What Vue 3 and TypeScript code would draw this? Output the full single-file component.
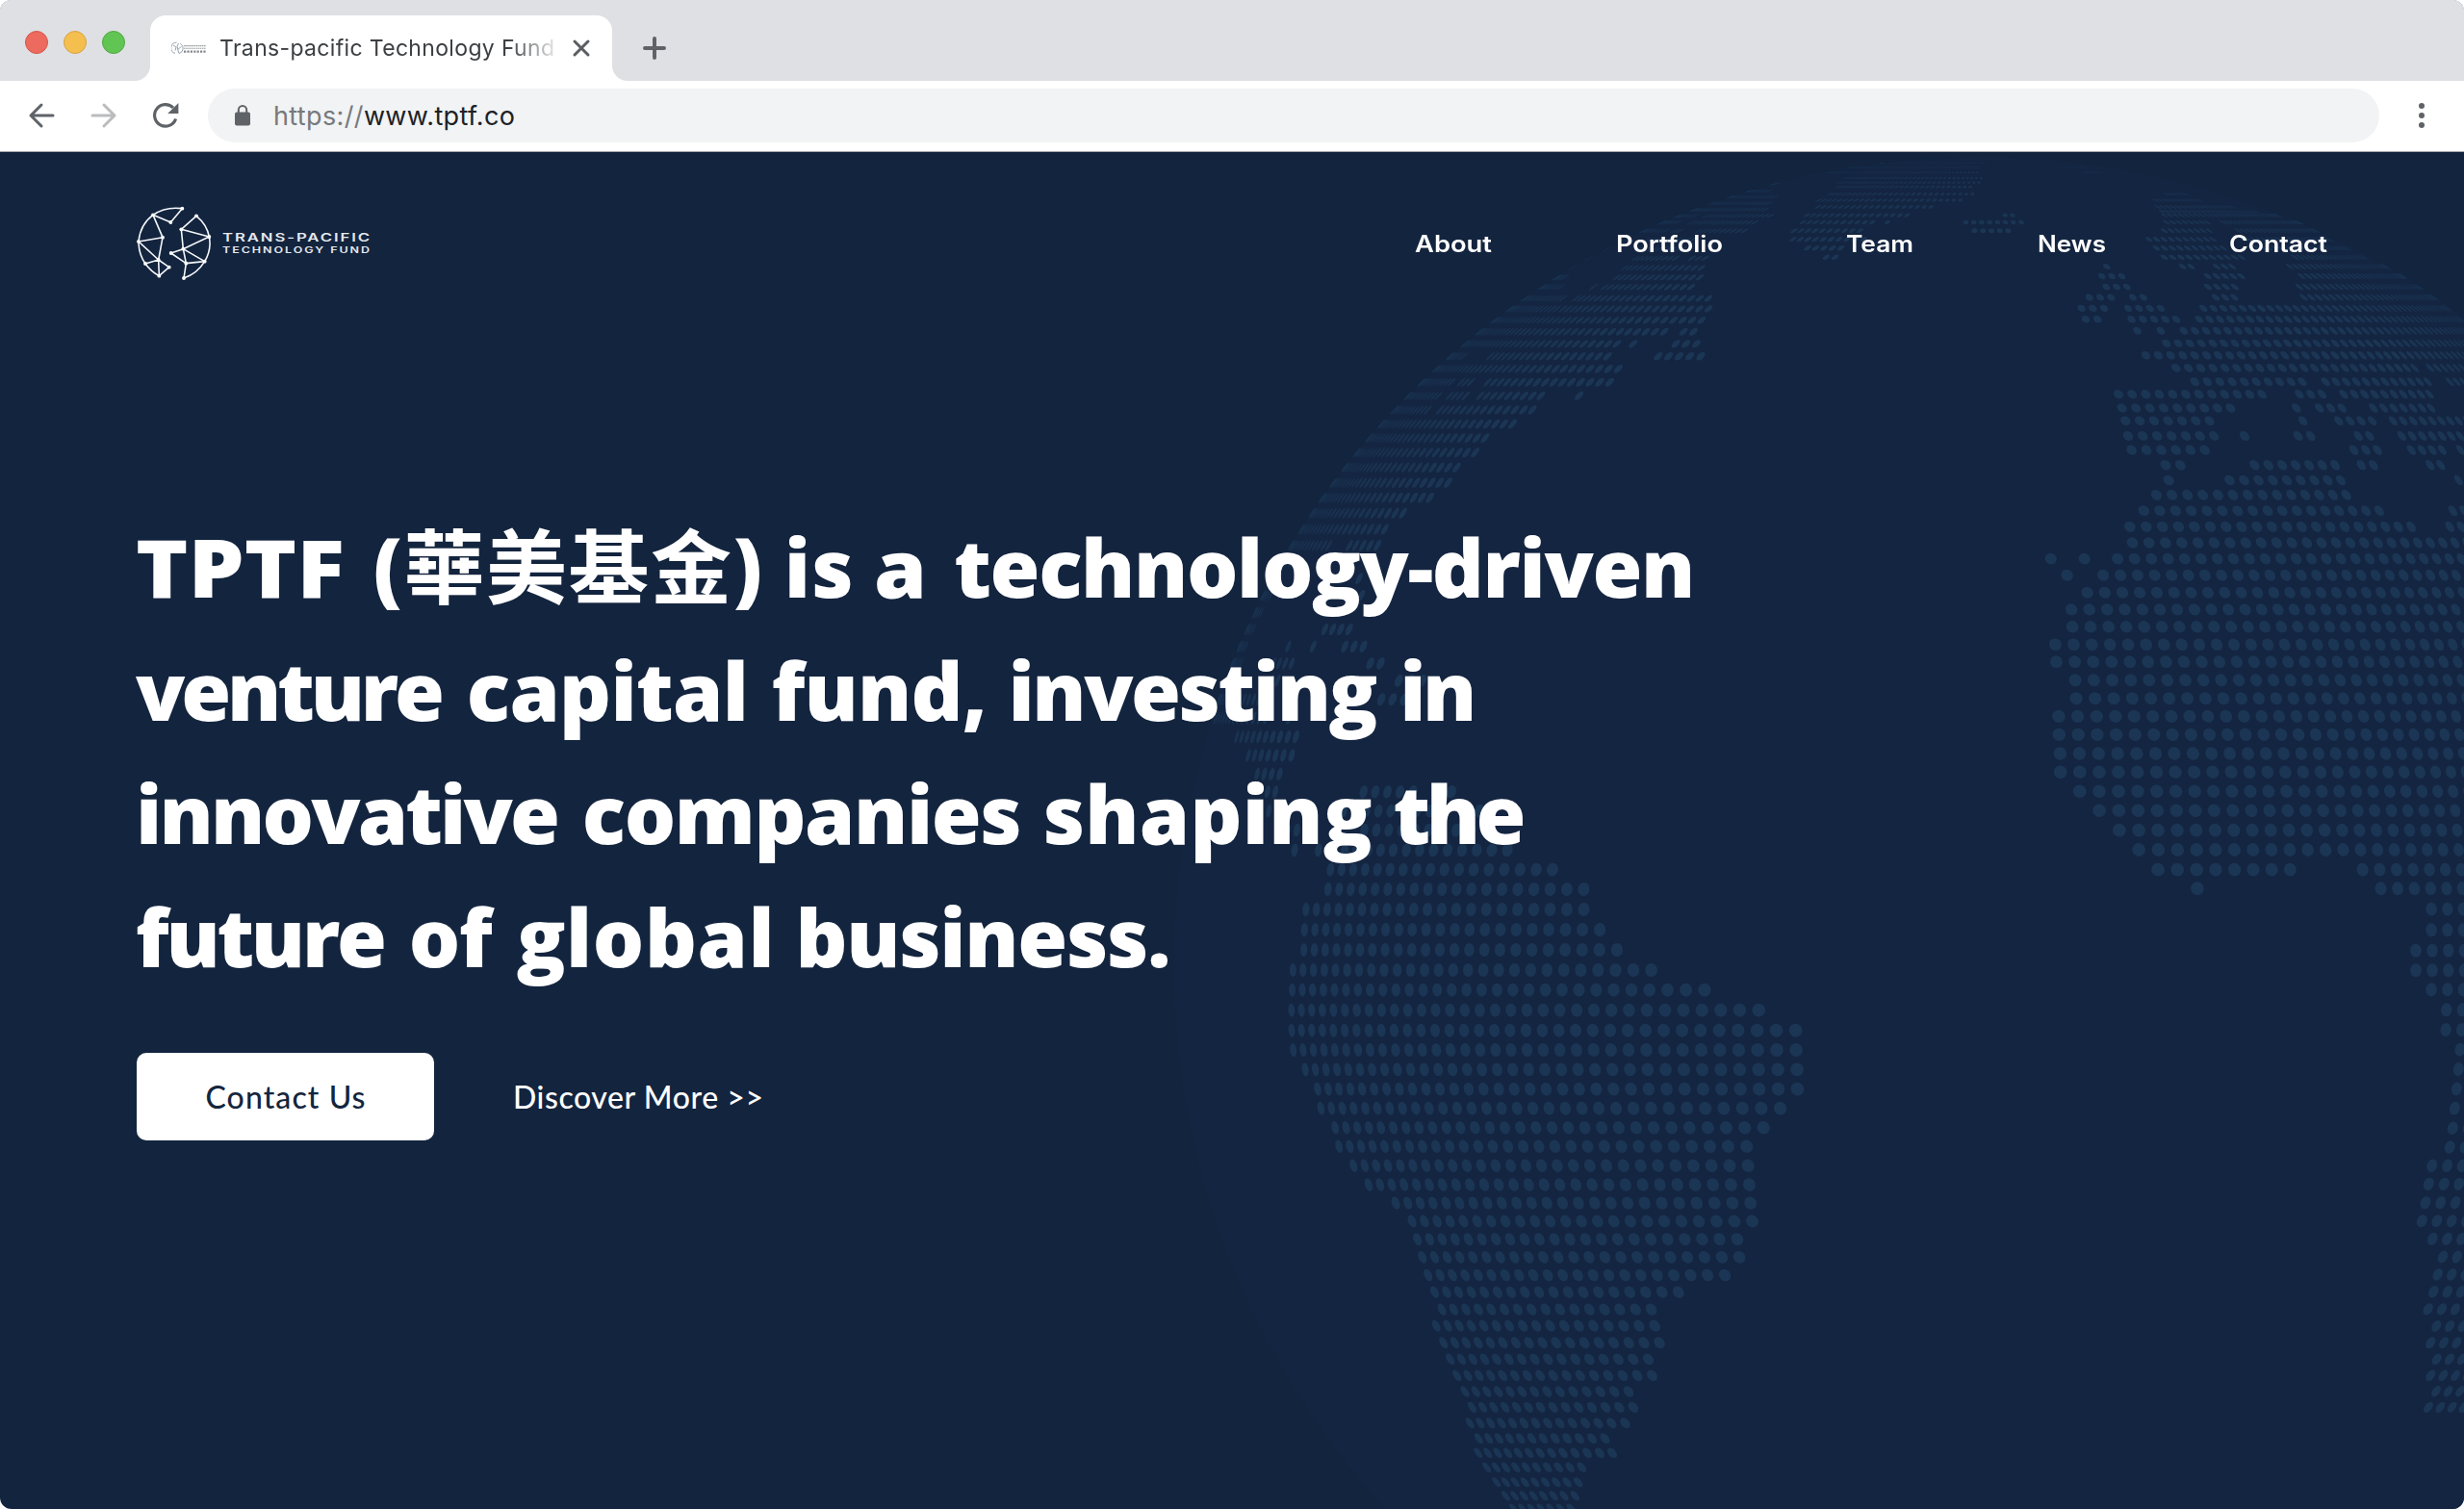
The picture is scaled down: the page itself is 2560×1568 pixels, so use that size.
<script setup lang="ts">
import type { Directive } from 'vue'

/*
 * Makes an element's text take the given width: by letter spacing, or with
 * the .stretch modifier by widening the letters themselves.
 */
const vFit: Directive<HTMLElement, number> = {
  mounted(el, binding) {
    const natural = el.getBoundingClientRect().width
    const count = Array.from(el.textContent ?? '').length
    if (binding.modifiers.stretch || el.classList.contains('caps') || count < 2) {
      el.style.transformOrigin = '0 50%'
      el.style.transform = `scaleX(${(binding.value / natural).toFixed(4)})`
      el.style.marginRight = `${(binding.value - natural).toFixed(3)}px`
      return
    }
    const step = (binding.value - natural) / (count - 1)
    el.style.letterSpacing = `${step.toFixed(3)}px`
    el.style.marginRight = `${(-step).toFixed(3)}px`
  },
}

const navItems = [
  { label: 'About', width: 80 },
  { label: 'Portfolio', width: 111 },
  { label: 'Team', width: 70 },
  { label: 'News', width: 71 },
  { label: 'Contact', width: 102 },
]

interface Word {
  text: string
  width: number
  /* extra space before the word */
  lead?: number
  /* Chinese characters, set in parentheses */
  han?: boolean
  caps?: boolean
}

const headline: Word[][] = [
  [
    { text: 'TPTF', width: 217, caps: true },
    { text: '華美基金', width: 404, lead: 8, han: true },
    { text: 'is', width: 72, lead: 1 },
    { text: 'a', width: 55 },
    { text: 'technology-driven', width: 770, lead: 6 },
  ],
  [
    { text: 'venture', width: 321 },
    { text: 'capital', width: 293, lead: 1 },
    { text: 'fund,', width: 224, lead: 2 },
    { text: 'investing', width: 384 },
    { text: 'in', width: 80, lead: 1 },
  ],
  [
    { text: 'innovative', width: 441 },
    { text: 'companies', width: 457, lead: 1 },
    { text: 'shaping', width: 342 },
    { text: 'the', width: 138 },
  ],
  [
    { text: 'future', width: 261 },
    { text: 'of', width: 87, lead: 1 },
    { text: 'global', width: 268, lead: 3 },
    { text: 'business.', width: 390 },
  ],
]

/* Globe: land is stored as rows of dots, each row being y followed by from/to pairs. */
interface Region {
  x: number
  y: number
  sx: number
  sy: number
  rows: number[][]
}

const CX = 2058
const CY = 1002
const R = 839
const DEPTH = 6
const STEP = 0.02103
const SCALE = R * Math.sqrt(DEPTH * DEPTH - 1)

const regions: Region[] = [
  {
    x: 1200, y: 150, sx: 2.24, sy: 3,
    rows: [
      [75, 1500, 1568], [95, 1430, 1520], [124, 1370, 1450], [145, 1300, 1430], [164, 1270, 1440],
      [184, 1210, 1280, 1300, 1430], [203, 1170, 1420], [223, 1140, 1260, 1280, 1432],
      [244, 1100, 1220, 1245, 1395], [270, 1070, 1190, 1210, 1222, 1262, 1372],
      [298, 1035, 1080, 1140, 1250], [326, 980, 1030, 1130, 1230], [355, 945, 990, 1118, 1212, 1255, 1280],
      [385, 910, 968, 1090, 1272], [415, 870, 955, 1075, 1268], [445, 830, 945, 1020, 1020, 1048, 1248],
      [480, 795, 950, 985, 1288], [513, 760, 935, 955, 1288], [548, 730, 1272], [584, 700, 1185, 1227, 1253],
      [622, 665, 1075, 1113, 1113, 1205, 1260], [661, 630, 720, 782, 1053, 1162, 1270], [700, 600, 1078],
      [742, 575, 690, 710, 735, 775, 1058], [784, 540, 660, 683, 723, 750, 898, 987, 987],
      [828, 510, 635, 658, 878], [872, 485, 832], [916, 455, 768], [961, 425, 745], [1007, 400, 702],
      [1055, 370, 682], [1102, 345, 640], [1150, 320, 577], [1200, 300, 535], [1250, 275, 405, 450, 518],
      [1302, 255, 330], [1354, 240, 290, 475, 475], [1406, 222, 270, 480, 480],
    ],
  },
  {
    x: 1200, y: 620, sx: 2.24, sy: 3,
    rows: [
      [50, 200, 248], [102, 180, 230, 402, 452], [155, 165, 212, 310, 310, 368, 368, 432, 485],
      [208, 150, 200, 278, 318, 490, 525], [262, 140, 180, 265, 285, 560, 622],
      [320, 140, 185, 200, 270, 515, 580], [378, 140, 258, 312, 312], [437, 190, 328], [495, 212, 318],
      [553, 240, 290], [608, 255, 280, 475, 600, 690, 690], [668, 265, 265, 450, 640, 755, 755],
      [728, 310, 330, 495, 770], [790, 325, 325, 375, 405, 430, 820], [851, 397, 925], [912, 393, 998],
      [975, 363, 998], [1038, 337, 1035], [1101, 335, 1075], [1164, 312, 1155], [1226, 312, 1279],
      [1289, 314, 1405], [1352, 318, 1491], [1413, 318, 1492], [1474, 348, 1494],
    ],
  },
  {
    x: 1200, y: 1080, sx: 2.24, sy: 3,
    rows: [
      [155, 382, 1495], [215, 388, 1455], [275, 420, 1416], [334, 427, 1377], [394, 464, 1380],
      [453, 500, 1383], [510, 567, 1386], [567, 605, 1390], [623, 617, 1355], [679, 626, 1360],
      [735, 640, 1326], [788, 652, 1218], [842, 667, 1155], [893, 653, 1163], [946, 668, 1174],
      [997, 683, 1148], [1048, 700, 1157], [1098, 717, 1102], [1147, 735, 1113], [1196, 728, 1094],
      [1244, 747, 1047], [1289, 743, 1064], [1334, 763, 993], [1381, 786, 985], [1423, 806, 977],
      [1462, 830, 968],
    ],
  },
  {
    x: 1850, y: 150, sx: 2.208, sy: 3,
    rows: [
      [45, 170, 390], [58, 150, 470], [72, 40, 455, 650, 700], [88, 0, 60, 110, 450, 700, 735],
      [105, 150, 460], [119, 140, 455], [133, 130, 435], [155, 110, 440, 885, 930], [174, 90, 412, 860, 960],
      [195, 80, 345, 865, 1040], [209, 875, 1090], [221, 60, 290, 515, 530, 880, 1140],
      [243, 57, 210, 245, 245, 425, 560, 885, 980, 1015, 1190], [269, 38, 182, 445, 525, 880, 980, 1050, 1230],
      [296, 35, 190, 845, 985, 1060, 1260], [323, 57, 138, 862, 1010, 1080, 1300],
      [352, 103, 125, 880, 1055, 1180, 1340], [381, 748, 748, 922, 950, 1000, 1042, 1168, 1390],
      [411, 737, 785, 980, 1062, 1195, 1430], [444, 747, 797, 980, 1050, 1190, 1465],
      [477, 708, 760, 808, 833, 998, 1045, 1200, 1500], [511, 690, 742, 797, 875, 970, 1530],
      [545, 700, 727, 805, 915, 960, 1560], [581, 818, 818, 872, 872, 925, 1568], [620, 885, 1568],
      [658, 838, 1568], [697, 907, 1460, 1490, 1568], [740, 950, 1205, 1250, 1490, 1535, 1568],
      [779, 775, 1112, 1190, 1250, 1292, 1495], [822, 783, 1037, 1183, 1183, 1236, 1293, 1360, 1498],
      [862, 791, 990, 1198, 1198, 1280, 1358, 1405, 1568],
      [909, 797, 1000, 1064, 1064, 1187, 1213, 1325, 1355, 1425, 1568],
      [953, 805, 978, 1315, 1370, 1447, 1520, 1560, 1568], [1000, 883, 918, 1087, 1277, 1332, 1360, 1490, 1515],
      [1047, 890, 890, 1030, 1292, 1555, 1568], [1093, 862, 1305], [1142, 833, 1380, 1542, 1568],
      [1192, 801, 1455, 1535, 1568], [1242, 807, 1568], [1292, 620, 620, 697, 697, 773, 1568],
      [1343, 657, 657, 740, 1568],
    ],
  },
  {
    x: 2000, y: 600, sx: 2.8, sy: 3,
    rows: [
      [47, 472, 1568], [100, 426, 1568], [154, 429, 1568], [209, 379, 1568], [263, 382, 1568],
      [320, 437, 1568], [377, 440, 1568], [433, 389, 1568], [490, 390, 1568], [549, 393, 1568],
      [607, 394, 1568], [667, 450, 1568], [727, 507, 1568], [788, 565, 1568], [849, 622, 1568],
      [911, 678, 1065, 1273, 1568], [970, 792, 792, 1326, 1568], [1034, 1473, 1568], [1099, 1473, 1568],
      [1163, 1428, 1568], [1225, 1428, 1568], [1285, 1473, 1568], [1348, 1517, 1568], [1410, 1515, 1568],
    ],
  },
  {
    x: 2350, y: 1050, sx: 3, sy: 3,
    rows: [
      [122, 618, 635], [183, 613, 635], [244, 607, 635], [305, 601, 635], [367, 595, 635], [426, 586, 635],
      [484, 530, 635], [541, 520, 635], [599, 510, 635], [656, 499, 635], [712, 532, 635], [768, 564, 635],
      [823, 548, 635], [877, 535, 635], [931, 518, 635], [984, 544, 635], [1036, 526, 635], [1087, 545, 635],
      [1138, 526, 635], [1187, 543, 635], [1237, 519, 635],
    ],
  },
]

const project = (t: number) => (SCALE * Math.sin(t)) / (DEPTH - Math.cos(t))
const slope = (t: number) => (SCALE * (DEPTH * Math.cos(t) - 1)) / (DEPTH - Math.cos(t)) ** 2

function unproject(value: number): number {
  const limit = Math.acos(1 / DEPTH) - 0.03
  let low = -limit
  let high = limit
  for (let i = 0; i < 30; i++) {
    const mid = (low + high) / 2
    if (project(mid) < value) low = mid
    else high = mid
  }
  return (low + high) / 2
}

interface Dot {
  transform: string
  opacity: number
}

const dots: Dot[] = []

function addSpan(y: number, from: number, to: number) {
  const dy = y - CY
  const w = Math.sqrt(Math.max(0.004, 1 - (dy / R) ** 2))
  const rowGap = 20.8 * Math.pow(w * w, 0.6)
  const fromLeft = Math.abs(from - CX) < Math.abs(to - CX)
  const start = unproject((fromLeft ? from - CX : to - CX) / w)
  const end = unproject((fromLeft ? to - CX : from - CX) / w)
  const total = Math.round(Math.abs(end - start) / STEP)
  const sign = fromLeft ? 1 : -1
  for (let i = 0; i <= total; i++) {
    const t = start + sign * i * STEP
    const g = project(t)
    const x = CX + w * g
    const a = Math.max(0.8, w * slope(t) * STEP * 0.34)
    const shear = ((-dy * rowGap) / (R * R * w)) * g * 0.32
    const d = rowGap * 0.335
    const edge = Math.hypot(x - CX, dy) / R
    if (edge > 1.005) break
    dots.push({
      transform: `matrix(${a.toFixed(2)} 0 ${shear.toFixed(2)} ${d.toFixed(2)} ${x.toFixed(1)} ${y.toFixed(1)})`,
      opacity: Math.max(0.5, Math.min(1, (1.16 - edge) * 4)),
    })
  }
}

for (const region of regions) {
  for (const row of region.rows) {
    for (let i = 1; i < row.length; i += 2) {
      addSpan(region.y + row[0] / region.sy, region.x + row[i] / region.sx, region.x + row[i + 1] / region.sx)
    }
  }
}

const logoNodes = [
  [178, 50], [87, 70], [142, 93], [42, 153], [117, 140], [63, 222], [104, 210], [137, 233], [106, 260],
  [222, 73], [175, 115], [262, 138], [181, 176], [143, 189], [190, 221], [248, 215], [183, 267],
]
</script>

<template>
  <div class="window">
    <div class="chrome">
      <div class="tabstrip">
        <div class="lights"><i class="red"></i><i class="yellow"></i><i class="green"></i></div>
        <div class="tab">
          <svg class="favicon" width="36" height="14" viewBox="0 0 36 14" fill="none">
            <g stroke="#8d9aa6" stroke-width="0.9">
              <path d="M5.5 1.2A5.7 5.7 0 0 0 4 12.4M2 4l3 2-1 3.5M7.5 2l-1.4 3 .6 3.4 3.8-3M8 12.6a5.7 5.7 0 0 0 1.4-10.4M6.7 8.4l1.2 4" />
            </g>
            <path d="M13 4.6h22.6M13 7.2h22.6" stroke="#9b9ea1" stroke-width="1.1" stroke-dasharray="1.6 .5" />
            <path d="M13 10.7h22.6" stroke="#85888c" stroke-width="2.2" stroke-dasharray="2.2 1.2" />
          </svg>
          <div class="tab-title"><span v-fit="348">Trans-pacific Technology Fund</span></div>
          <svg class="close" width="20" height="20" viewBox="0 0 20 20" stroke="#5a5d61" stroke-width="3" stroke-linecap="round">
            <path d="M3 3l14 14M17 3L3 17" />
          </svg>
        </div>
        <svg class="plus" width="28" height="28" viewBox="0 0 28 28" stroke="#5f6368" stroke-width="4" stroke-linecap="round">
          <path d="M14 4v20M4 14h20" />
        </svg>
      </div>
      <div class="toolbar">
        <svg width="28" height="28" viewBox="0 0 28 28" fill="none" stroke="#5f6368" stroke-width="3" stroke-linecap="round" stroke-linejoin="round">
          <path d="M26 14H3M14 3L3 14l11 11" />
        </svg>
        <svg class="forward" width="28" height="28" viewBox="0 0 28 28" fill="none" stroke="#babcbe" stroke-width="3" stroke-linecap="round" stroke-linejoin="round">
          <path d="M2 14h23M14 3l11 11-11 11" />
        </svg>
        <svg class="reload" width="30" height="30" viewBox="0 0 30 30" fill="none">
          <path d="M25.6 18.5A11.3 11.3 0 1 1 23 7" stroke="#5f6368" stroke-width="3.2" />
          <path d="M28.4 2v11H17.2z" fill="#5f6368" />
        </svg>
        <div class="address">
          <svg width="16" height="22" viewBox="0 0 16 22" fill="none">
            <rect x="0" y="7.5" width="16" height="14" rx="2" fill="#5f6368" />
            <path d="M3.8 8V5.2a4.2 4.2 0 0 1 8.4 0V8" stroke="#5f6368" stroke-width="2" />
          </svg>
          <div class="url"><span v-fit="251"><i>https://</i>www.tptf.co</span></div>
        </div>
        <div class="menu"><i></i><i></i><i></i></div>
      </div>
    </div>

    <main class="page">
      <svg class="globe" width="2560" height="1410" viewBox="0 158 2560 1410">
        <circle :cx="CX" :cy="CY" :r="R" fill="#142541" />
        <g fill="#1b3654">
          <circle v-for="(dot, i) in dots" :key="i" r="1" :transform="dot.transform" :opacity="dot.opacity" />
        </g>
      </svg>

      <header class="header">
        <svg width="244" height="82" viewBox="36 36 732 246" class="logo">
          <g fill="none" stroke="#f4f6f9" stroke-width="4.8" stroke-linejoin="round">
            <path d="M178 50Q126 43 87 70Q47 99 42 153Q42 192 63 222Q80 246 106 260" />
            <path d="M178 50L142 93L87 70L117 140L42 153L104 210L63 222M117 140L104 210L106 260L137 233L104 210" />
            <path d="M222 73Q255 100 262 138Q270 178 248 215Q225 253 183 267" />
            <path d="M222 73L175 115L262 138L181 176L248 215L190 221L143 189L181 176L175 115M181 176L190 221L183 267" />
          </g>
          <circle v-for="([x, y], i) in logoNodes" :key="i" :cx="x" :cy="y" r="5.8" fill="#fff" />
          <g fill="#e6e9ee" font-family="Inter, 'Liberation Sans', sans-serif">
            <text x="303" y="153" font-size="35" font-weight="600" textLength="465" lengthAdjust="spacingAndGlyphs" letter-spacing="4">TRANS-PACIFIC</text>
            <text x="303" y="188.5" font-size="26" font-weight="600" textLength="465" lengthAdjust="spacingAndGlyphs" letter-spacing="4">TECHNOLOGY FUND</text>
          </g>
        </svg>
        <nav class="nav">
          <a v-for="item in navItems" :key="item.label"><span v-fit.stretch="item.width">{{ item.label }}</span></a>
        </nav>
      </header>

      <section class="hero">
        <h1>
          <div v-for="(line, i) in headline" :key="i">
            <template v-for="(word, j) in line" :key="j"
              ><span v-fit="word.width" :class="{ caps: word.caps }" :style="{ marginLeft: `${word.lead ?? 0}px` }"
                ><template v-if="word.han">(<b>{{ word.text }}</b>)</template
                ><template v-else>{{ word.text }}</template></span
              >{{ ' ' }}</template
            >
          </div>
        </h1>
        <div class="actions">
          <a class="primary"><span v-fit="166">Contact Us</span></a>
          <a class="secondary"><span v-fit="260">Discover More &gt;&gt;</span></a>
        </div>
      </section>
    </main>
  </div>
</template>

<style>
body {
  background: #fff;
}
</style>

<style scoped>
.window {
  width: 2560px;
  height: 1568px;
  overflow: hidden;
  border-radius: 12px;
  background: #13243e;
  display: flex;
  flex-direction: column;
}
span {
  display: inline-block;
  white-space: nowrap;
}
.chrome {
  height: 158px;
  box-sizing: border-box;
  background: #fff;
  border-bottom: 1px solid #a9abaf;
  flex: none;
}
.tabstrip {
  height: 84px;
  background: #dee0e4;
  display: flex;
}
.lights {
  display: flex;
  gap: 16px;
  padding: 32px 0 0 26px;
  width: 130px;
}
.lights i {
  width: 24px;
  height: 24px;
  box-sizing: border-box;
  border-radius: 50%;
}
.red {
  background: #ed6a5e;
  border: 1px solid #d5564b;
}
.yellow {
  background: #f5bf4f;
  border: 1px solid #d8a13f;
}
.green {
  background: #61c554;
  border: 1px solid #52a842;
}
.tab {
  position: relative;
  width: 480px;
  height: 68px;
  margin-top: 16px;
  box-sizing: border-box;
  padding-left: 22px;
  border-radius: 16px 16px 0 0;
  background: #fff;
  display: flex;
  align-items: center;
}
.tab::before,
.tab::after {
  content: '';
  position: absolute;
  bottom: 0;
  width: 16px;
  height: 16px;
}
.tab::before {
  left: -16px;
  background: radial-gradient(circle at 0 0, transparent 15.5px, #fff 16.5px);
}
.tab::after {
  right: -16px;
  background: radial-gradient(circle at 100% 0, transparent 15.5px, #fff 16.5px);
}
.tab-title {
  margin-left: 14px;
  width: 352px;
  font: 400 23px/34px Inter, sans-serif;
  color: #3c4043;
  -webkit-mask-image: linear-gradient(90deg, #000 300px, transparent 356px);
  mask-image: linear-gradient(90deg, #000 300px, transparent 356px);
}
.close {
  margin-left: 14px;
}
.plus {
  margin: 36px 0 0 30px;
}
.toolbar {
  height: 72px;
  display: flex;
  align-items: center;
  padding-left: 29px;
}
.toolbar > svg {
  flex: none;
}
.forward {
  margin-left: 37px;
}
.reload {
  margin-left: 35px;
}
.address {
  width: 2256px;
  height: 56px;
  flex: none;
  box-sizing: border-box;
  margin-left: 29px;
  padding-left: 28px;
  border-radius: 28px;
  background: #f1f3f4;
  display: flex;
  align-items: center;
}
.url {
  margin-left: 24px;
  padding-top: 1px;
  font: 400 27px/40px Inter, sans-serif;
  color: #202124;
}
.url i {
  font-style: normal;
  color: #77797d;
}
.menu {
  display: flex;
  flex-direction: column;
  gap: 4px;
  margin-left: 41px;
}
.menu i {
  width: 6px;
  height: 6px;
  border-radius: 50%;
  background: #5f6368;
}
.page {
  position: relative;
  flex: 1;
}
.globe {
  position: absolute;
  left: 0;
  top: 0;
}
.header {
  position: relative;
  height: 190px;
  padding: 0 142px 0 142px;
  display: flex;
  align-items: center;
  justify-content: space-between;
}
.nav {
  display: flex;
  gap: 128.5px;
  padding-top: 2px;
  font: 600 24px/32px Inter, sans-serif;
  color: #fff;
}
.hero {
  position: relative;
  padding: 177px 0 0 141px;
}
h1 {
  margin: 0;
  font: 800 84px/128px 'Open Sans', 'Noto Sans CJK TC', sans-serif;
  color: #fff;
}
h1 div {
  height: 128px;
  white-space: nowrap;
}
h1 b {
  font-weight: 700;
}
.actions {
  margin: 57px 0 0 1px;
  display: flex;
  align-items: center;
  font: 500 32px/40px Lato, sans-serif;
  color: #fff;
}
.primary {
  width: 309px;
  height: 91px;
  border-radius: 10px;
  background: #fff;
  color: #14253e;
  display: flex;
  align-items: center;
  justify-content: center;
}
.secondary {
  margin-left: 82px;
}
</style>
